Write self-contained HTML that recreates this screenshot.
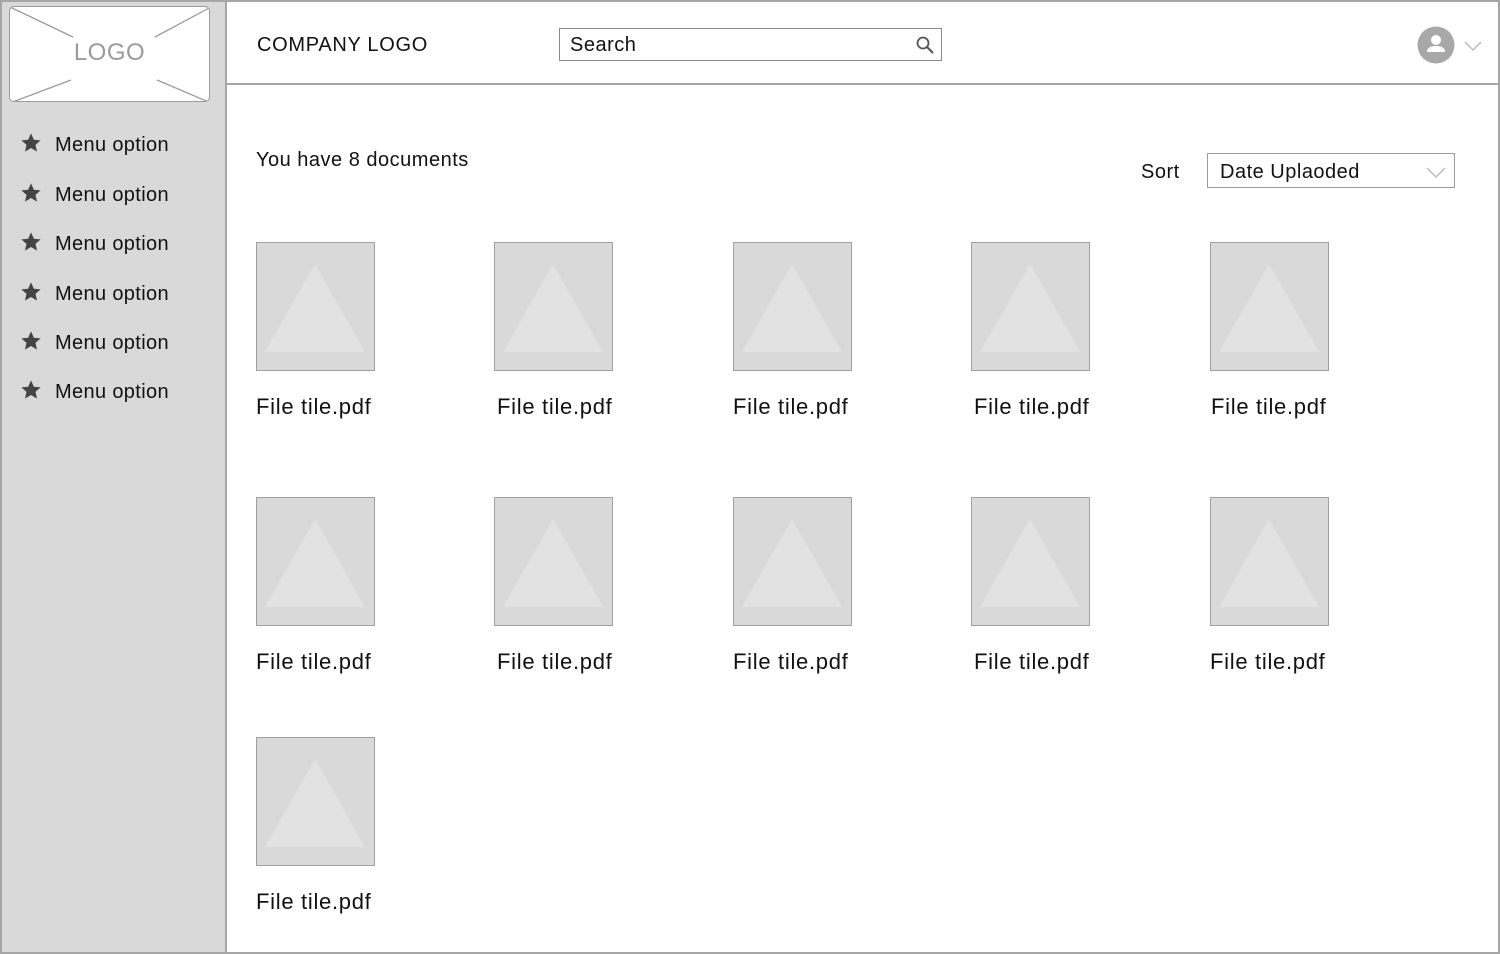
<!DOCTYPE html>
<html><head><style>
*{margin:0;padding:0;box-sizing:border-box}
body{width:1500px;height:954px;position:relative;background:#fff;font-family:"Liberation Sans",Arial,sans-serif;overflow:hidden}
.frame{position:absolute;left:0;top:0;width:1500px;height:954px;border:2px solid #a6a6a6}
.side{position:absolute;left:0;top:0;width:227px;height:954px;background:#d9d9d9;border-right:2px solid #a6a6a6}
.logo{position:absolute;left:9px;top:6px;width:201px;height:96px;background:#fff;border:1.5px solid #9b9b9b;border-radius:5px;overflow:hidden}
.logo span{position:absolute;left:0;right:0;top:32px;text-align:center;font-size:24px;color:#9b9b9b;letter-spacing:0.5px}
.menu{position:absolute;left:20px;font-size:20px;color:#111}
.menu svg{position:absolute;left:0;top:-1px}
.menu b{font-weight:normal;position:absolute;left:35px;top:1px;white-space:nowrap;letter-spacing:0.35px}
.hdr{position:absolute;left:227px;top:83px;width:1273px;height:2px;background:#a6a6a6}
.t{position:absolute;font-size:20px;color:#111;white-space:nowrap;letter-spacing:0.5px}
.tile{position:absolute;width:119px;height:129px;background:#d9d9d9;border:1.5px solid #a0a0a0}
.lbl{position:absolute;font-size:22px;color:#111;white-space:nowrap;letter-spacing:0.7px}
</style></head><body>
<div class="side">
<div class="logo"><svg width="201" height="96" style="position:absolute;left:0;top:0"><g stroke="#9b9b9b" stroke-width="1.3"><line x1="0" y1="0" x2="63" y2="30"/><line x1="201" y1="0" x2="145" y2="30"/><line x1="0" y1="96" x2="61" y2="73"/><line x1="201" y1="96" x2="147" y2="73"/></g></svg><span>LOGO</span></div>
</div>
<div class="hdr"></div>
<div class="frame"></div>
<div class="t" style="left:257px;top:34px;letter-spacing:0.7px">COMPANY LOGO</div>
<div style="position:absolute;left:559px;top:28px;width:383px;height:33px;border:1.5px solid #8a8a8a"></div>
<div class="t" style="left:570px;top:34px">Search</div>
<svg style="position:absolute;left:915px;top:35px" width="20" height="20"><circle cx="8" cy="8" r="5.5" fill="none" stroke="#555" stroke-width="1.8"/><line x1="12" y1="12" x2="18" y2="18" stroke="#555" stroke-width="2"/></svg>
<svg style="position:absolute;left:1417px;top:26px" width="70" height="38"><circle cx="19" cy="19" r="18.5" fill="#a8a8a8"/><circle cx="19" cy="14" r="5" fill="#fff"/><path d="M10 26 Q10 20 19 20 Q28 20 28 26 Z" fill="#fff"/><polyline points="48,16 56,24 64,16" fill="none" stroke="#bbb" stroke-width="1.5"/></svg>
<div class="t" style="left:256px;top:149px">You have 8 documents</div>
<div class="t" style="left:1141px;top:161px">Sort</div>
<div style="position:absolute;left:1207px;top:153px;width:248px;height:35px;border:1.5px solid #9a9a9a"></div>
<div class="t" style="left:1220px;top:161px">Date Uplaoded</div>
<svg style="position:absolute;left:1425px;top:165px" width="24" height="14"><polyline points="2,3 11,12 20,3" fill="none" stroke="#bbb" stroke-width="1.5"/></svg>
<div id="m"></div>
<script>
var s='';
var ys=[144,194,243,293,342,391];
ys.forEach(function(y){s+='<div class="menu" style="top:'+(y-11)+'px"><svg width="22" height="22" viewBox="0 0 24 24"><path d="M12 1.5l3.1 7 7.4.6-5.6 4.9 1.7 7.4L12 17.5l-6.6 3.9 1.7-7.4L1.5 9.1l7.4-.6z" fill="#444"/></svg><b>Menu option</b></div>';});
var xs=[256,494,733,971,1210],lx=[256,497,733,974,1211],lx2=[256,497,733,974,1210];
function tile(x,y,l){s+='<div class="tile" style="left:'+x+'px;top:'+y+'px"><svg width="116" height="126" style="position:absolute;left:0;top:0"><polygon points="58,21 108,109 8,109" fill="#e2e2e2"/></svg></div><div class="lbl" style="left:'+l+'px;top:'+(y+152)+'px">File tile.pdf</div>';}
for(var i=0;i<5;i++){tile(xs[i],242,lx[i]);tile(xs[i],497,lx2[i]);}
tile(256,737,256);
document.getElementById('m').innerHTML=s;
</script>
</body></html>
